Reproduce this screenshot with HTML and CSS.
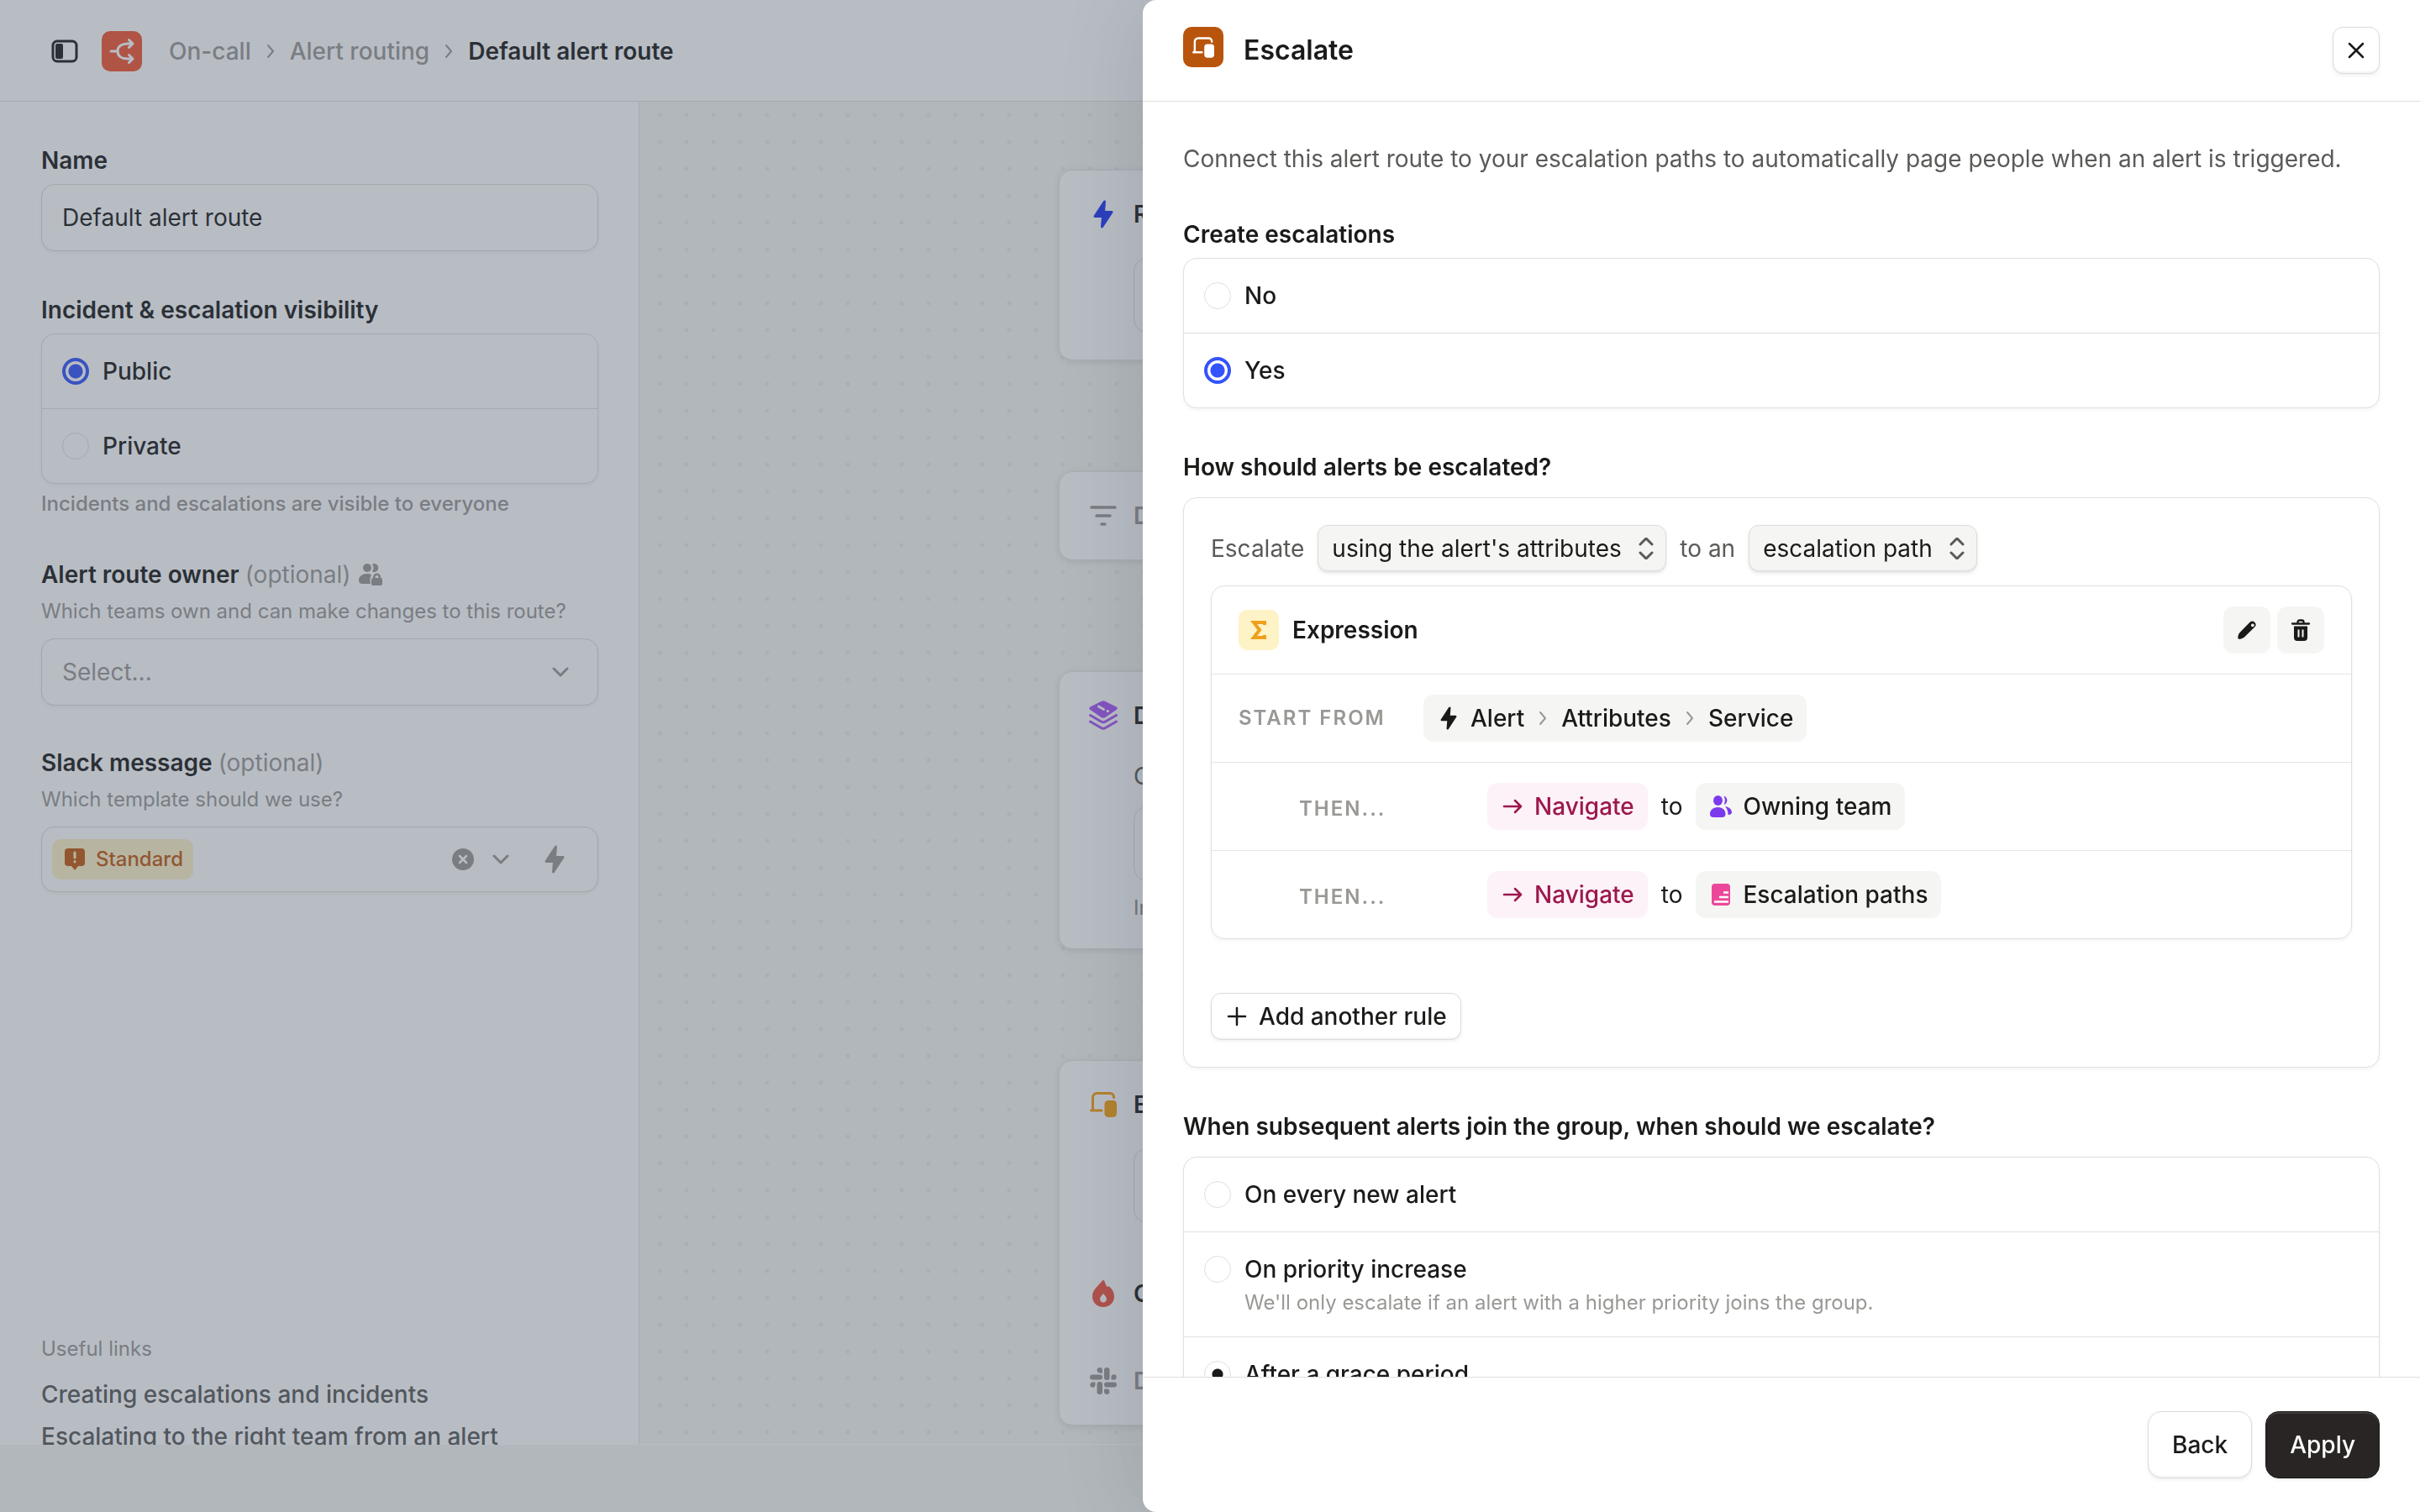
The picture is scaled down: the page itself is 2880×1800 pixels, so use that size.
FILE: index.html
```
<!DOCTYPE html>
<html lang="en">
<head>
    <meta charset="utf-8">
    <title>Default alert route</title>
    <meta name="viewport" content="width=device-width, initial-scale=1.0">
    <link rel="stylesheet" href="styles.css">
</head>
<body>
    <!-- shared icons -->
    <svg class="sprite" aria-hidden="true">
        <symbol id="chevron-right" viewBox="0 0 12 20"><path d="M3 3l6 7-6 7" fill="none" stroke="currentColor" stroke-width="2" stroke-linecap="round" stroke-linejoin="round"/></symbol>
        <symbol id="chevron-down" viewBox="0 0 20 12"><path d="M2 2l8 8 8-8" fill="none" stroke="currentColor" stroke-width="3" stroke-linecap="round" stroke-linejoin="round"/></symbol>
        <symbol id="chevrons" viewBox="0 0 20 26"><path d="M3 8l7-7 7 7M3 18l7 7 7-7" fill="none" stroke="currentColor" stroke-width="3" stroke-linecap="round" stroke-linejoin="round"/></symbol>
        <symbol id="bolt" viewBox="0 0 24 34"><path d="M13.500 2L2 19.500h9.500L10.500 32 22 14.500H12.500z" fill="currentColor" stroke="currentColor" stroke-width="3" stroke-linejoin="round"/></symbol>
        <symbol id="devices" viewBox="0 0 32 30">
            <path d="M3.500 21.500V6.500a5 5 0 0 1 5-5H24a4.500 4.500 0 0 1 4.500 4.500v.5M1.500 22H14" fill="none" stroke="currentColor" stroke-width="3" stroke-linecap="round"/>
            <rect x="17.500" y="10" width="14.500" height="20" rx="4.500" fill="currentColor"/>
        </symbol>
        <symbol id="arrow" viewBox="0 0 24 20"><path d="M2 10h20M15 3l7 7-7 7" fill="none" stroke="currentColor" stroke-width="2.500" stroke-linecap="round" stroke-linejoin="round"/></symbol>
    </svg>

    <div class="app">
        <header class="topbar">
            <button class="icon-button" aria-label="Toggle sidebar">
                <svg width="32" height="28" viewBox="0 0 32 28"><rect x="2" y="2" width="28" height="24" rx="5" fill="none" stroke="currentColor" stroke-width="3"/><rect x="5" y="5" width="9" height="18" rx="2" fill="currentColor"/></svg>
            </button>
            <span class="tile tile-red">
                <svg width="32" height="32" viewBox="0 0 32 32" fill="none" stroke="currentColor" stroke-width="3" stroke-linecap="round" stroke-linejoin="round"><path d="M3 16h8M29 7h-6c-7 0-12 3-12 9s5 9 12 9h6M24.500 2.500L29 7l-4.500 4.500M24.500 20.500L29 25l-4.500 4.500"/></svg>
            </span>
            <nav class="breadcrumb">
                <a href="#">On-call</a>
                <svg width="12" height="20"><use href="#chevron-right"/></svg>
                <a href="#">Alert routing</a>
                <svg width="12" height="20"><use href="#chevron-right"/></svg>
                <a href="#" class="current">Default alert route</a>
            </nav>
        </header>

        <div class="main">
            <aside class="sidebar">
                <div class="field">
                    <label class="label" for="name">Name</label>
                    <input class="input" id="name" type="text" value="Default alert route">
                </div>

                <div class="field" role="radiogroup" aria-labelledby="visibility">
                    <div class="label" id="visibility">Incident &amp; escalation visibility</div>
                    <div class="options">
                        <label class="option"><input type="radio" name="visibility" checked><span>Public</span></label>
                        <label class="option"><input type="radio" name="visibility"><span>Private</span></label>
                    </div>
                    <p class="help help-below">Incidents and escalations are visible to everyone</p>
                </div>

                <div class="field">
                    <label class="label" for="owner">Alert route owner <span class="optional">(optional)</span>
                        <svg class="label-icon" width="28" height="26" viewBox="0 0 28 26" fill="currentColor"><circle cx="10" cy="5" r="5"/><path d="M16 .5a5 5 0 1 1 0 9c2-3 2-6 0-9zM10 12c4 0 5 1 5 2-2 2-2 7-1 10H5c-3 0-5-1-5-4 0-5 4-8 10-8z"/><path fill-rule="evenodd" d="M17 17v-1a4.500 4.500 0 0 1 9 0v1a2 2 0 0 1 2 2v5a2 2 0 0 1-2 2h-9a2 2 0 0 1-2-2v-5a2 2 0 0 1 2-2zm2.500 0h4v-1a2 2 0 0 0-4 0z"/></svg>
                    </label>
                    <p class="help">Which teams own and can make changes to this route?</p>
                    <div class="select">
                        <select class="input" id="owner"><option>Select...</option></select>
                        <svg width="20" height="12"><use href="#chevron-down"/></svg>
                    </div>
                </div>

                <div class="field">
                    <div class="label">Slack message <span class="optional">(optional)</span></div>
                    <p class="help">Which template should we use?</p>
                    <div class="input tag-input">
                        <span class="tag">
                            <svg width="26" height="26" viewBox="0 0 26 26"><path d="M5 0h16a4 4 0 0 1 4 4v13a4 4 0 0 1-4 4h-4l-4 5-4-5H5a4 4 0 0 1-4-4V4a4 4 0 0 1 4-4z" fill="currentColor"/><path d="M13 5v6M13 15.500v.5" stroke="#fef3c7" stroke-width="3" stroke-linecap="round"/></svg>
                            Standard
                        </span>
                        <button class="icon-button" aria-label="Clear">
                            <svg width="26" height="26" viewBox="0 0 26 26"><circle cx="13" cy="13" r="13" fill="currentColor"/><path d="M9 9l8 8M17 9l-8 8" stroke="#fff" stroke-width="2.500" stroke-linecap="round"/></svg>
                        </button>
                        <button class="icon-button" aria-label="Open"><svg width="20" height="12"><use href="#chevron-down"/></svg></button>
                        <button class="icon-button variable" aria-label="Insert variable"><svg width="24" height="34"><use href="#bolt"/></svg></button>
                    </div>
                </div>

                <div class="links">
                    <p class="help">Useful links</p>
                    <a href="#">Creating escalations and incidents</a>
                    <a href="#">Escalating to the right team from an alert</a>
                </div>
            </aside>

            <section class="canvas">
                <div class="node">
                    <div class="node-row">
                        <svg class="blue" width="24" height="34"><use href="#bolt"/></svg>
                        <h3>Run</h3>
                    </div>
                    <div class="slot"></div>
                </div>
                <div class="node">
                    <div class="node-row muted">
                        <svg width="32" height="24" viewBox="0 0 32 24" stroke="currentColor" stroke-width="3.500" stroke-linecap="round"><path d="M2 2h28M8 12h16M14 22h4"/></svg>
                        <h3>Drop</h3>
                    </div>
                </div>
                <div class="node">
                    <div class="node-row">
                        <svg class="purple" width="34" height="36" viewBox="0 0 34 36"><path d="M14.500 1q2.500-1.400 5 0l13 6.500q2.500 1.500 0 3.500l-13 9q-2.500 1.500-5 0l-13-9q-2.500-2 0-3.500z" fill="currentColor"/><path d="M1.500 17.500l13 7.500q2.500 1.500 5 0l13-7.500M1.500 25l13 7.500q2.500 1.500 5 0l13-7.500" fill="none" stroke="currentColor" stroke-width="3" stroke-linecap="round"/><path d="M11.500 7l6 3.500M22 12.500h.5" stroke="#fff" stroke-width="3" stroke-linecap="round"/></svg>
                        <h3>Dedupe</h3>
                    </div>
                    <div class="node-text">Group</div>
                    <div class="slot slot-near"></div>
                    <p class="node-help">In 1h</p>
                </div>
                <div class="node">
                    <div class="node-row">
                        <svg class="amber" width="32" height="30"><use href="#devices"/></svg>
                        <h3>Esc</h3>
                    </div>
                    <div class="slot"></div>
                    <div class="node-row node-gap">
                        <svg class="red" width="26" height="32" viewBox="0 0 26 32"><path fill-rule="evenodd" d="M12 .5c1-1 2-.4 2.500.8.7 3 2 5 3.500 7 .3-1 1-1.300 2-.8C24 10.500 26 15 26 19.500 26 26.500 20.500 32 13 32S0 26.500 0 19.500C0 11 7 7 12 .5zM13 16c-2 2.500-4 4-4 6.500 0 2.300 1.800 4 4 4s4-1.700 4-4c0-2.500-2-4-4-6.500z" fill="currentColor"/></svg>
                        <h3>Call</h3>
                    </div>
                    <div class="node-row node-gap muted">
                        <svg width="32" height="32" viewBox="0 0 32 32" fill="currentColor"><rect x="17" y="0" width="6.500" height="15" rx="3.200"/><rect x="17" y="17.500" width="15" height="6" rx="3"/><rect x="8.500" y="17" width="6.500" height="15" rx="3.200"/><rect x="0" y="8.500" width="15" height="6" rx="3"/><path d="M15 6.500V3.200a3.200 3.200 0 1 0-3.200 3.300zM25.500 14.500h3.300a3.100 3.100 0 1 0-3.300-3.100zM17 25.500v3.300a3.200 3.200 0 1 0 3.200-3.300zM6.500 17.500H3.200a3.100 3.100 0 1 0 3.300 3.100z"/></svg>
                        <h3>DM</h3>
                    </div>
                </div>
            </section>
        </div>
    </div>

    <div class="overlay"></div>

    <div class="drawer" role="dialog" aria-labelledby="drawer-title">
        <header class="drawer-header">
            <span class="tile tile-orange"><svg width="26" height="25"><use href="#devices"/></svg></span>
            <h2 id="drawer-title">Escalate</h2>
            <button class="btn btn-square" aria-label="Close">
                <svg width="20" height="20" viewBox="0 0 20 20"><path d="M2 2l16 16M18 2L2 18" stroke="currentColor" stroke-width="2.500" stroke-linecap="round"/></svg>
            </button>
        </header>

        <div class="drawer-body">
            <p class="intro">Connect this alert route to your escalation paths to automatically page people when an alert is triggered.</p>

            <div class="field" role="radiogroup" aria-labelledby="create">
                <div class="label" id="create">Create escalations</div>
                <div class="options">
                    <label class="option"><input type="radio" name="create"><span>No</span></label>
                    <label class="option"><input type="radio" name="create" checked><span>Yes</span></label>
                </div>
            </div>

            <div class="field field-wide">
                <div class="label">How should alerts be escalated?</div>
                <div class="panel">
                    <div class="sentence">
                        <label for="using">Escalate</label>
                        <div class="mini-select">
                            <select id="using"><option>using the alert's attributes</option></select>
                            <svg width="20" height="26"><use href="#chevrons"/></svg>
                        </div>
                        <label for="target">to an</label>
                        <div class="mini-select">
                            <select id="target"><option>escalation path</option></select>
                            <svg width="20" height="26"><use href="#chevrons"/></svg>
                        </div>
                    </div>

                    <div class="expression">
                        <div class="expr-row">
                            <span class="tile tile-yellow"><svg width="20" height="24" viewBox="0 0 20 24"><path d="M17 6V3H4l7 9-7 9h13v-3" fill="none" stroke="currentColor" stroke-width="4"/></svg></span>
                            <h3>Expression</h3>
                            <button class="soft" aria-label="Edit">
                                <svg width="24" height="24" viewBox="0 0 24 24"><path fill-rule="evenodd" d="M15.500 2.800a4 4 0 0 1 5.700 5.700L9 20.500c-2 1.700-4.500 2.300-6.500 2.300-.8 0-1.200-.4-1.200-1.200 0-2.500.5-4.800 2.500-6.800zm3.300 1.700a1.900 1.900 0 1 0 .1 0z" fill="currentColor"/></svg>
                            </button>
                            <button class="soft" aria-label="Delete">
                                <svg width="24" height="28" viewBox="0 0 24 28"><path d="M2 6.500h20M8.500 6V4.500a2 2 0 0 1 2-2h3a2 2 0 0 1 2 2V6" fill="none" stroke="currentColor" stroke-width="2.300" stroke-linecap="round"/><path fill-rule="evenodd" d="M4 9.500h16V23a4 4 0 0 1-4 4H8a4 4 0 0 1-4-4zM8.500 13.500v9h2v-9zm5 0v9h2v-9z" fill="currentColor"/></svg>
                            </button>
                        </div>
                        <div class="expr-row">
                            <span class="step">Start from</span>
                            <span class="pill">
                                <svg width="28" height="28" viewBox="0 0 24 34"><use href="#bolt" width="24" height="34"/></svg>
                                Alert
                                <svg class="sep" width="12" height="20"><use href="#chevron-right"/></svg>
                                Attributes
                                <svg class="sep" width="12" height="20"><use href="#chevron-right"/></svg>
                                Service
                            </span>
                        </div>
                        <div class="expr-row">
                            <span class="step step-then">Then...</span>
                            <span class="pill pill-pink"><svg width="28" height="20"><use href="#arrow"/></svg>Navigate</span>
                            <span>to</span>
                            <span class="pill">
                                <svg class="violet" width="28" height="26" viewBox="0 0 26 26" fill="currentColor"><ellipse cx="9.500" cy="6" rx="5.500" ry="6"/><path d="M16.500.5a5.500 5.500 0 0 1 0 10.500c1.800-3.500 1.800-7 0-10.500zM9.500 14c6 0 9 4 9 8 0 3-2 4-4 4h-10c-2.500 0-4.500-1-4.500-4 0-4 3-8 9.500-8zM18 13c5 .5 8 4 8 7 0 2-1.500 3-4.500 3 0-4-1-7.500-3.500-10z"/></svg>
                                Owning team
                            </span>
                        </div>
                        <div class="expr-row">
                            <span class="step step-then">Then...</span>
                            <span class="pill pill-pink"><svg width="28" height="20"><use href="#arrow"/></svg>Navigate</span>
                            <span>to</span>
                            <span class="pill">
                                <svg class="pink" width="28" height="26" viewBox="0 0 26 26"><rect x="2" width="22" height="26" rx="4" fill="currentColor"/><path d="M16 10.500h6M11 16h11M5 21.500h17" stroke="#fff" stroke-width="2.500"/></svg>
                                Escalation paths
                            </span>
                        </div>
                    </div>

                    <button class="btn add">
                        <svg width="28" height="24" viewBox="0 0 28 24"><path d="M14 2v20M4 12h20" stroke="currentColor" stroke-width="2.500" stroke-linecap="round"/></svg>
                        Add another rule
                    </button>
                </div>
            </div>

            <div class="field field-wide" role="radiogroup" aria-labelledby="when">
                <div class="label" id="when">When subsequent alerts join the group, when should we escalate?</div>
                <div class="options">
                    <label class="option"><input type="radio" name="when"><span>On every new alert</span></label>
                    <label class="option"><input type="radio" name="when"><span>On priority increase<small>We'll only escalate if an alert with a higher priority joins the group.</small></span></label>
                    <label class="option"><input class="dark" type="radio" name="when" checked><span>After a grace period</span></label>
                </div>
            </div>
        </div>

        <footer class="drawer-footer">
            <button class="btn btn-large">Back</button>
            <button class="btn btn-large btn-dark">Apply</button>
        </footer>
    </div>
</body>
</html>
```

FILE: styles.css
```
* {
    box-sizing: border-box;
}
body {
    margin: 0;
    height: 100vh;
    overflow: hidden;
    font-family: Inter, "Liberation Sans", sans-serif;
    font-size: 28px;
    line-height: 40px;
    color: #1a1a19;
    background-color: #f4f5ef;
}
h2, h3, p {
    margin: 0;
    font-size: 28px;
    font-weight: 600;
}
a {
    color: inherit;
    text-decoration: none;
}
button, input, select {
    font: inherit;
    color: inherit;
}
button {
    cursor: pointer;
}
svg {
    flex: none;
}
.sprite {
    display: none;
}
.app {
    display: flex;
    flex-direction: column;
    height: 100vh;
    padding-bottom: 80px;
}

/* top bar */
.topbar {
    display: flex;
    align-items: center;
    height: 121px;
    padding: 2px 61px 0;
    background-color: #fff;
    border-bottom: 1px solid #dfdfdd;
}
.icon-button {
    display: flex;
    padding: 0;
    border: none;
    background: none;
}
.tile {
    display: flex;
    align-items: center;
    justify-content: center;
    flex: none;
    width: 48px;
    height: 48px;
    border-radius: 10px;
    color: #fff;
}
.tile-red {
    margin: 0 32px 0 28px;
    background-color: #f25533;
}
.tile-orange {
    margin-bottom: 8px;
    background-color: #b8540c;
}
.tile-yellow {
    color: #f0a01c;
    background-color: #fef3c7;
}
.breadcrumb {
    display: flex;
    align-items: center;
    gap: 17px;
    font-weight: 500;
    color: #9a9895;
}
.current {
    font-weight: 600;
    color: #1a1a19;
}

/* sidebar */
.main {
    display: flex;
    flex: 1;
    min-height: 0;
}
.sidebar {
    display: flex;
    flex-direction: column;
    gap: 48px;
    width: 761px;
    padding: 48px 48px 0 49px;
    overflow: hidden;
    background-color: #fff;
    border-right: 1px solid #e5e5e4;
}
.field {
    display: flex;
    flex-direction: column;
}
.label {
    margin: 2px 0 8px;
    font-weight: 600;
}
.label:has(+ .help) {
    margin-top: 0;
}
.field-wide .label {
    margin-bottom: 16px;
}
.label-icon {
    margin-left: 2px;
    vertical-align: -3px;
    color: #9a9895;
}
.optional {
    font-weight: 400;
    color: #9a9895;
}
.help {
    margin-bottom: 16px;
    font-size: 24px;
    line-height: 32px;
    font-weight: 400;
    color: #9a9895;
}
.help-below {
    margin: 8px 0 0;
    font-weight: 500;
}
.input {
    width: 100%;
    height: 80px;
    padding: 0 24px;
    border: 1px solid #dbdbd9;
    border-radius: 16px;
    background-color: #fff;
    box-shadow: 0 2px 4px rgba(0, 0, 0, 0.05);
}
.select {
    display: grid;
    align-items: center;
    color: #9a9895;
}
.select select, .mini-select select {
    appearance: none;
    grid-area: 1 / 1;
}
.select svg, .mini-select svg {
    grid-area: 1 / 1;
    justify-self: end;
    pointer-events: none;
}
.select svg {
    margin-right: 35px;
}
.tag-input {
    display: flex;
    align-items: center;
    gap: 22px;
    height: 78px;
    padding: 0 39px 0 12px;
    color: #9a9895;
}
.tag {
    display: flex;
    align-items: center;
    gap: 12px;
    height: 48px;
    margin-right: auto;
    padding: 0 12px 0 14px;
    border-radius: 10px;
    font-size: 24px;
    font-weight: 500;
    color: #c2590f;
    background-color: #fef3c7;
}
.variable {
    margin-left: 20px;
}
.options {
    border: 1px solid #e0e0de;
    border-radius: 16px;
    background-color: #fff;
    box-shadow: 0 2px 4px rgba(0, 0, 0, 0.05);
}
.option {
    display: flex;
    gap: 16px;
    padding: 24px;
    font-weight: 500;
}
.option + .option {
    border-top: 1px solid #e0e0de;
}
.option input {
    appearance: none;
    flex: none;
    width: 32px;
    height: 32px;
    margin: 4px 0;
    border: 1px solid #e0e0de;
    border-radius: 50%;
}
.option input:checked {
    border: 4px solid #3353fb;
    background: radial-gradient(circle, #3353fb 8px, #fff 9px);
}
.option input.dark:checked {
    border: 1px solid #e0e0de;
    background: radial-gradient(circle, #1a1a19 6px, #fff 7px);
}
.option small {
    display: block;
    margin-top: 4px;
    font-size: 24px;
    line-height: 32px;
    font-weight: 400;
    color: #9a9895;
}
.links {
    display: flex;
    flex-direction: column;
    gap: 10px;
    margin-top: auto;
    margin-bottom: -10px;
    font-weight: 500;
    color: #5a5a58;
}
.links .help {
    margin-bottom: 8px;
}

/* flow canvas */
.canvas {
    display: flex;
    flex-direction: column;
    align-items: center;
    gap: 132px;
    flex: 1;
    min-width: 0;
    padding-top: 81px;
    background: radial-gradient(circle, #e8e9e3 2px, transparent 3px) 8px 0 / 32px 32px;
    border-bottom: 1px solid #fff;
    overflow: hidden;
}
.node {
    width: 100%;
    max-width: 1121px;
    padding: 32px;
    border: 1px solid #e5e5e4;
    border-radius: 16px;
    background-color: #fff;
    box-shadow: 0 2px 8px rgba(0, 0, 0, 0.1);
}
.node-row {
    display: grid;
    grid-template-columns: 40px 1fr;
    gap: 16px;
    align-items: center;
    justify-items: start;
    height: 40px;
}
.node-row svg {
    justify-self: center;
}
.node-gap {
    margin-top: 64px;
}
.slot {
    height: 89px;
    margin: 32px 0 0 56px;
    border: 1px solid #e0e0de;
    border-radius: 16px;
}
.slot-near {
    margin-top: 16px;
}
.node-text {
    margin: 32px 0 0 56px;
    color: #5a5a58;
}
.node-help {
    margin: 16px 0 0 56px;
    font-size: 24px;
    line-height: 32px;
    font-weight: 400;
    color: #8a8a88;
}
.muted {
    color: #9a9895;
}
.blue {
    color: #1c34f5;
}
.purple {
    color: #a855f7;
}
.amber {
    color: #f59e0b;
}
.red {
    color: #f0533c;
}
.violet {
    color: #7c3aed;
}
.pink {
    color: #ec4899;
}

/* drawer */
.overlay {
    position: fixed;
    inset: 0;
    background-color: rgba(70, 84, 102, 0.383);
}
.drawer {
    position: fixed;
    top: 0;
    right: 0;
    bottom: 0;
    display: flex;
    flex-direction: column;
    width: 100%;
    max-width: 1520px;
    overflow: hidden;
    background-color: #fff;
    border-radius: 16px 0 0 16px;
    box-shadow: 0 0 100px rgba(20, 28, 44, 0.14);
}
.drawer-header {
    display: flex;
    align-items: center;
    gap: 24px;
    flex: none;
    height: 121px;
    padding: 0 48px;
    border-bottom: 1px solid #e0e0de;
}
.drawer-header h2 {
    flex: 1;
    font-size: 32px;
}
.btn {
    display: flex;
    align-items: center;
    justify-content: center;
    gap: 12px;
    height: 56px;
    padding: 0 16px;
    border: 1px solid #dbdbd9;
    border-radius: 12px;
    font-weight: 500;
    background-color: #fff;
    box-shadow: 0 2px 4px rgba(0, 0, 0, 0.06), inset 0 -2px 0 #f5f5f4;
}
.btn-square {
    width: 56px;
    padding: 0;
}
.btn-large {
    height: 80px;
    padding: 0 28px;
    border-radius: 16px;
}
.btn-dark {
    color: #fff;
    border-color: #1a1a19;
    background-color: #292524;
    box-shadow: 0 2px 4px rgba(0, 0, 0, 0.06), inset 0 2px 0 #403c3b;
}
.drawer-body {
    display: flex;
    flex-direction: column;
    gap: 48px;
    flex: 1;
    min-height: 0;
    padding: 48px 48px 0;
    overflow: hidden;
}
.intro {
    font-weight: 400;
    color: #5a5a58;
}
.panel {
    display: flex;
    flex-direction: column;
    padding: 32px;
    border: 1px solid #e0e0de;
    border-radius: 16px;
    box-shadow: 0 2px 4px rgba(0, 0, 0, 0.05);
}
.sentence {
    display: flex;
    align-items: center;
    gap: 16px;
    color: #5a5a58;
}
.mini-select {
    display: grid;
    align-items: center;
}
.mini-select select {
    height: 56px;
    padding: 0 52px 0 16px;
    border: 1px solid #dbdbd9;
    border-radius: 12px;
    color: #1a1a19;
    background-color: #f5f5f4;
    box-shadow: 0 2px 4px rgba(0, 0, 0, 0.08), inset 0 -2px 0 #ebebea;
}
.mini-select svg {
    margin-right: 14px;
}
.expression {
    margin: 16px 0 64px;
    border: 1px solid #e0e0de;
    border-radius: 16px;
    box-shadow: 0 2px 4px rgba(0, 0, 0, 0.05);
}
.expr-row {
    display: flex;
    align-items: center;
    gap: 16px;
    height: 104px;
    padding: 0 32px;
}
.expr-row + .expr-row {
    height: 105px;
    border-top: 1px solid #e5e5e4;
}
.expr-row h3 {
    flex: 1;
}
.soft {
    display: flex;
    align-items: center;
    justify-content: center;
    width: 56px;
    height: 56px;
    padding: 0;
    border: none;
    border-radius: 12px;
    background-color: #f5f5f4;
}
.soft + .soft {
    margin-left: -8px;
}
.step {
    width: 204px;
    font-size: 24px;
    font-weight: 600;
    letter-spacing: 2px;
    text-transform: uppercase;
    color: #9a9895;
}
.step-then {
    width: 280px;
    padding: 6px 0 0 72px;
}
.pill {
    display: flex;
    align-items: center;
    gap: 12px;
    height: 56px;
    padding: 0 16px;
    border-radius: 12px;
    font-weight: 500;
    background-color: #f5f5f4;
}
.pill-pink {
    color: #9d174d;
    background-color: #fdf2f8;
}
.sep {
    margin: 0 4px;
    color: #9a9895;
}
.add {
    align-self: flex-start;
}
.drawer-footer {
    display: flex;
    align-items: center;
    justify-content: flex-end;
    gap: 16px;
    flex: none;
    height: 161px;
    padding: 0 48px;
    border-top: 1px solid #e0e0de;
}
```
